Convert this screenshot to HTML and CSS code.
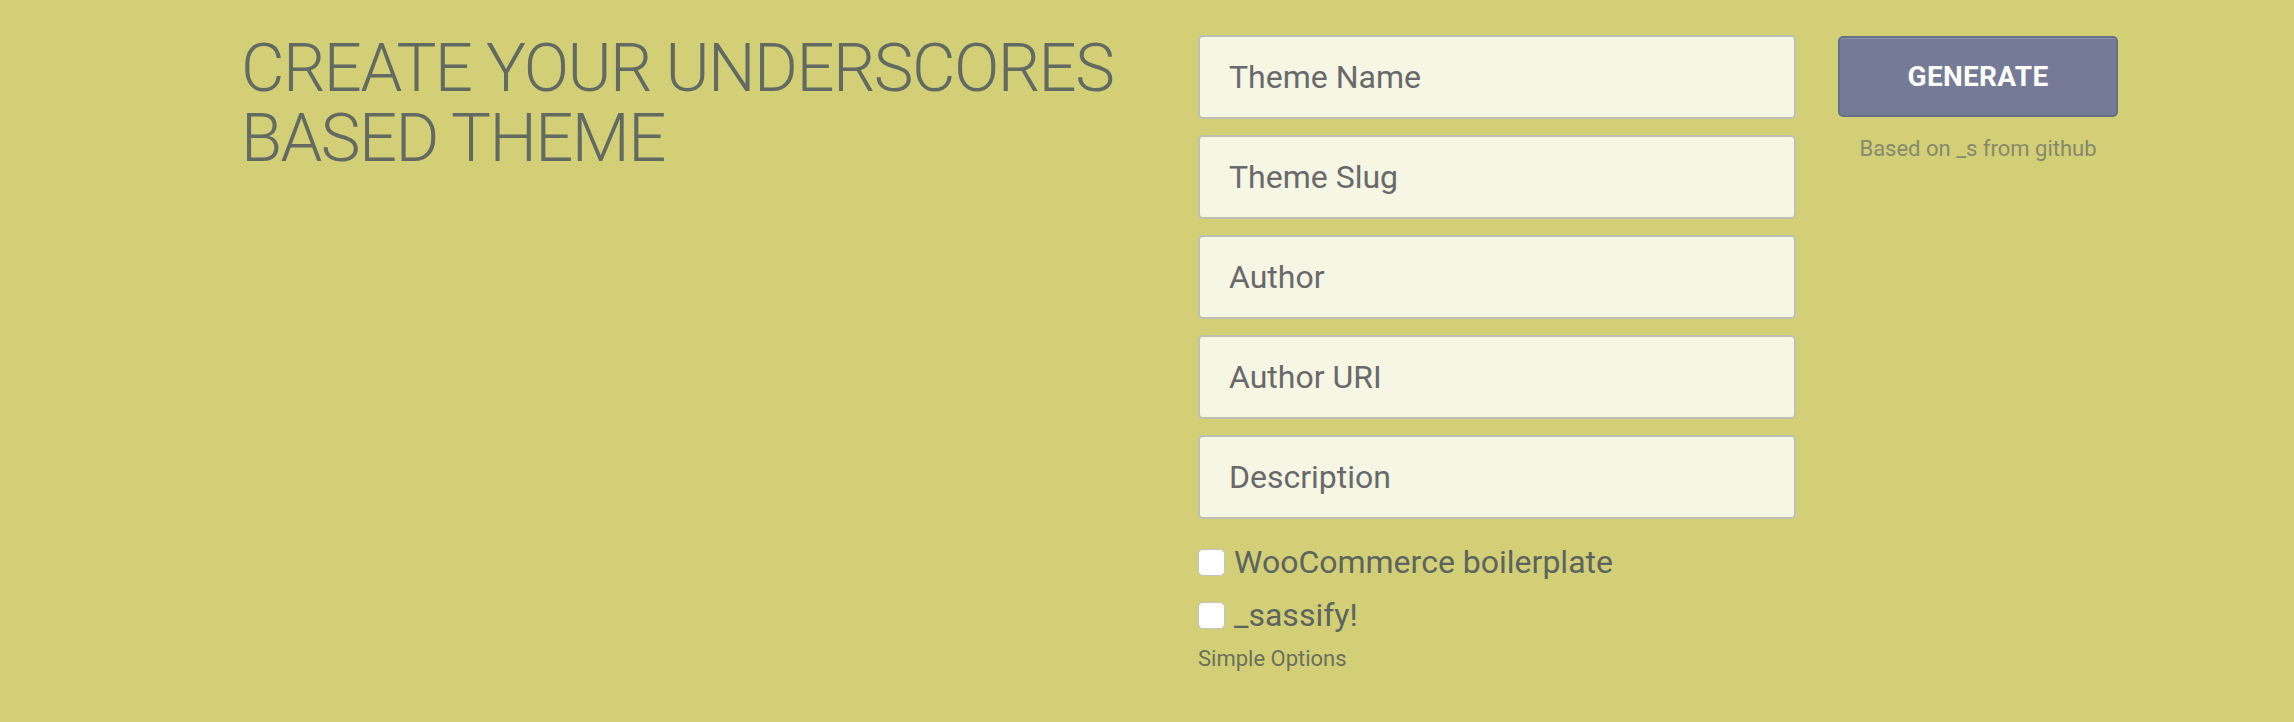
FILE: index.html
```html
<!DOCTYPE html>
<html lang="en">
<head>
<meta charset="utf-8">
<title>Create your Underscores based theme</title>
<link rel="stylesheet" href="styles.css">
</head>
<body>
<main class="page">
  <section class="intro">
    <h1 class="title">CREATE YOUR UNDERSCORES BASED THEME</h1>
  </section>
  <form class="form">
    <div class="fields">
      <input class="field" type="text" placeholder="Theme Name">
      <input class="field" type="text" placeholder="Theme Slug">
      <input class="field" type="text" placeholder="Author">
      <input class="field" type="text" placeholder="Author URI">
      <input class="field" type="text" placeholder="Description">
      <label class="check"><input class="box" type="checkbox"><span>WooCommerce boilerplate</span></label>
      <label class="check"><input class="box" type="checkbox"><span>_sassify!</span></label>
      <p class="options">Simple Options</p>
    </div>
    <div class="actions">
      <button class="generate" type="button">GENERATE</button>
      <p class="based">Based on _s from github</p>
    </div>
  </form>
</main>
</body>
</html>
```

FILE: styles.css
```css
html, body {
  margin: 0;
  padding: 0;
  background: #d2cf77;
}
body {
  font-family: Roboto, "Liberation Sans", sans-serif;
  width: 2294px;
  height: 722px;
  overflow: hidden;
}
.page {
  display: flex;
  align-items: flex-start;
  padding: 35px 0 0 241px;
}
.intro {
  width: 957px;
  flex: none;
}
.title {
  margin: -2px 0 0;
  font-weight: 300;
  font-size: 67px;
  line-height: 70px;
  letter-spacing: -1.6px;
  color: #626a62;
  width: 920px;
}
.form {
  display: flex;
  align-items: flex-start;
  gap: 42px;
}
.fields {
  display: flex;
  flex-direction: column;
  width: 598px;
}
.field {
  box-sizing: border-box;
  height: 84px;
  width: 598px;
  margin: 0 0 16px;
  padding: 0 0 0 29px;
  border: 2px solid #bfc0b1;
  border-radius: 5px;
  background: #f5f6e4;
  font-family: Roboto, "Liberation Sans", sans-serif;
  font-size: 32px;
  color: #69696a;
  outline: none;
}
.field::placeholder {
  color: #69696a;
  opacity: 1;
}
.field:last-of-type {
  margin-bottom: 26px;
}
.check {
  display: flex;
  align-items: center;
  gap: 9px;
  height: 34px;
  margin-bottom: 19px;
  font-size: 32px;
  color: #5d645f;
}
.box {
  appearance: none;
  -webkit-appearance: none;
  box-sizing: border-box;
  width: 27px;
  height: 27px;
  margin: 0;
  border: 1px solid #c4c4c0;
  border-radius: 5px;
  background: #ffffff;
  flex: none;
}
.options {
  margin: -5px 0 0;
  font-size: 22px;
  color: #6b705c;
}
.actions {
  display: flex;
  flex-direction: column;
  align-items: center;
  width: 280px;
}
.generate {
  box-sizing: border-box;
  width: 280px;
  height: 81px;
  margin-top: 1px;
  border: 2px solid #686d88;
  border-radius: 5px;
  background: #757b96;
  box-shadow: inset 0 1px 0 #8c91aa;
  color: #ffffff;
  font-family: Roboto, "Liberation Sans", sans-serif;
  font-weight: 700;
  font-size: 28px;
  letter-spacing: 0.3px;
  cursor: pointer;
}
.based {
  margin: 19px 0 0;
  font-size: 22px;
  color: #87896c;
}
```
